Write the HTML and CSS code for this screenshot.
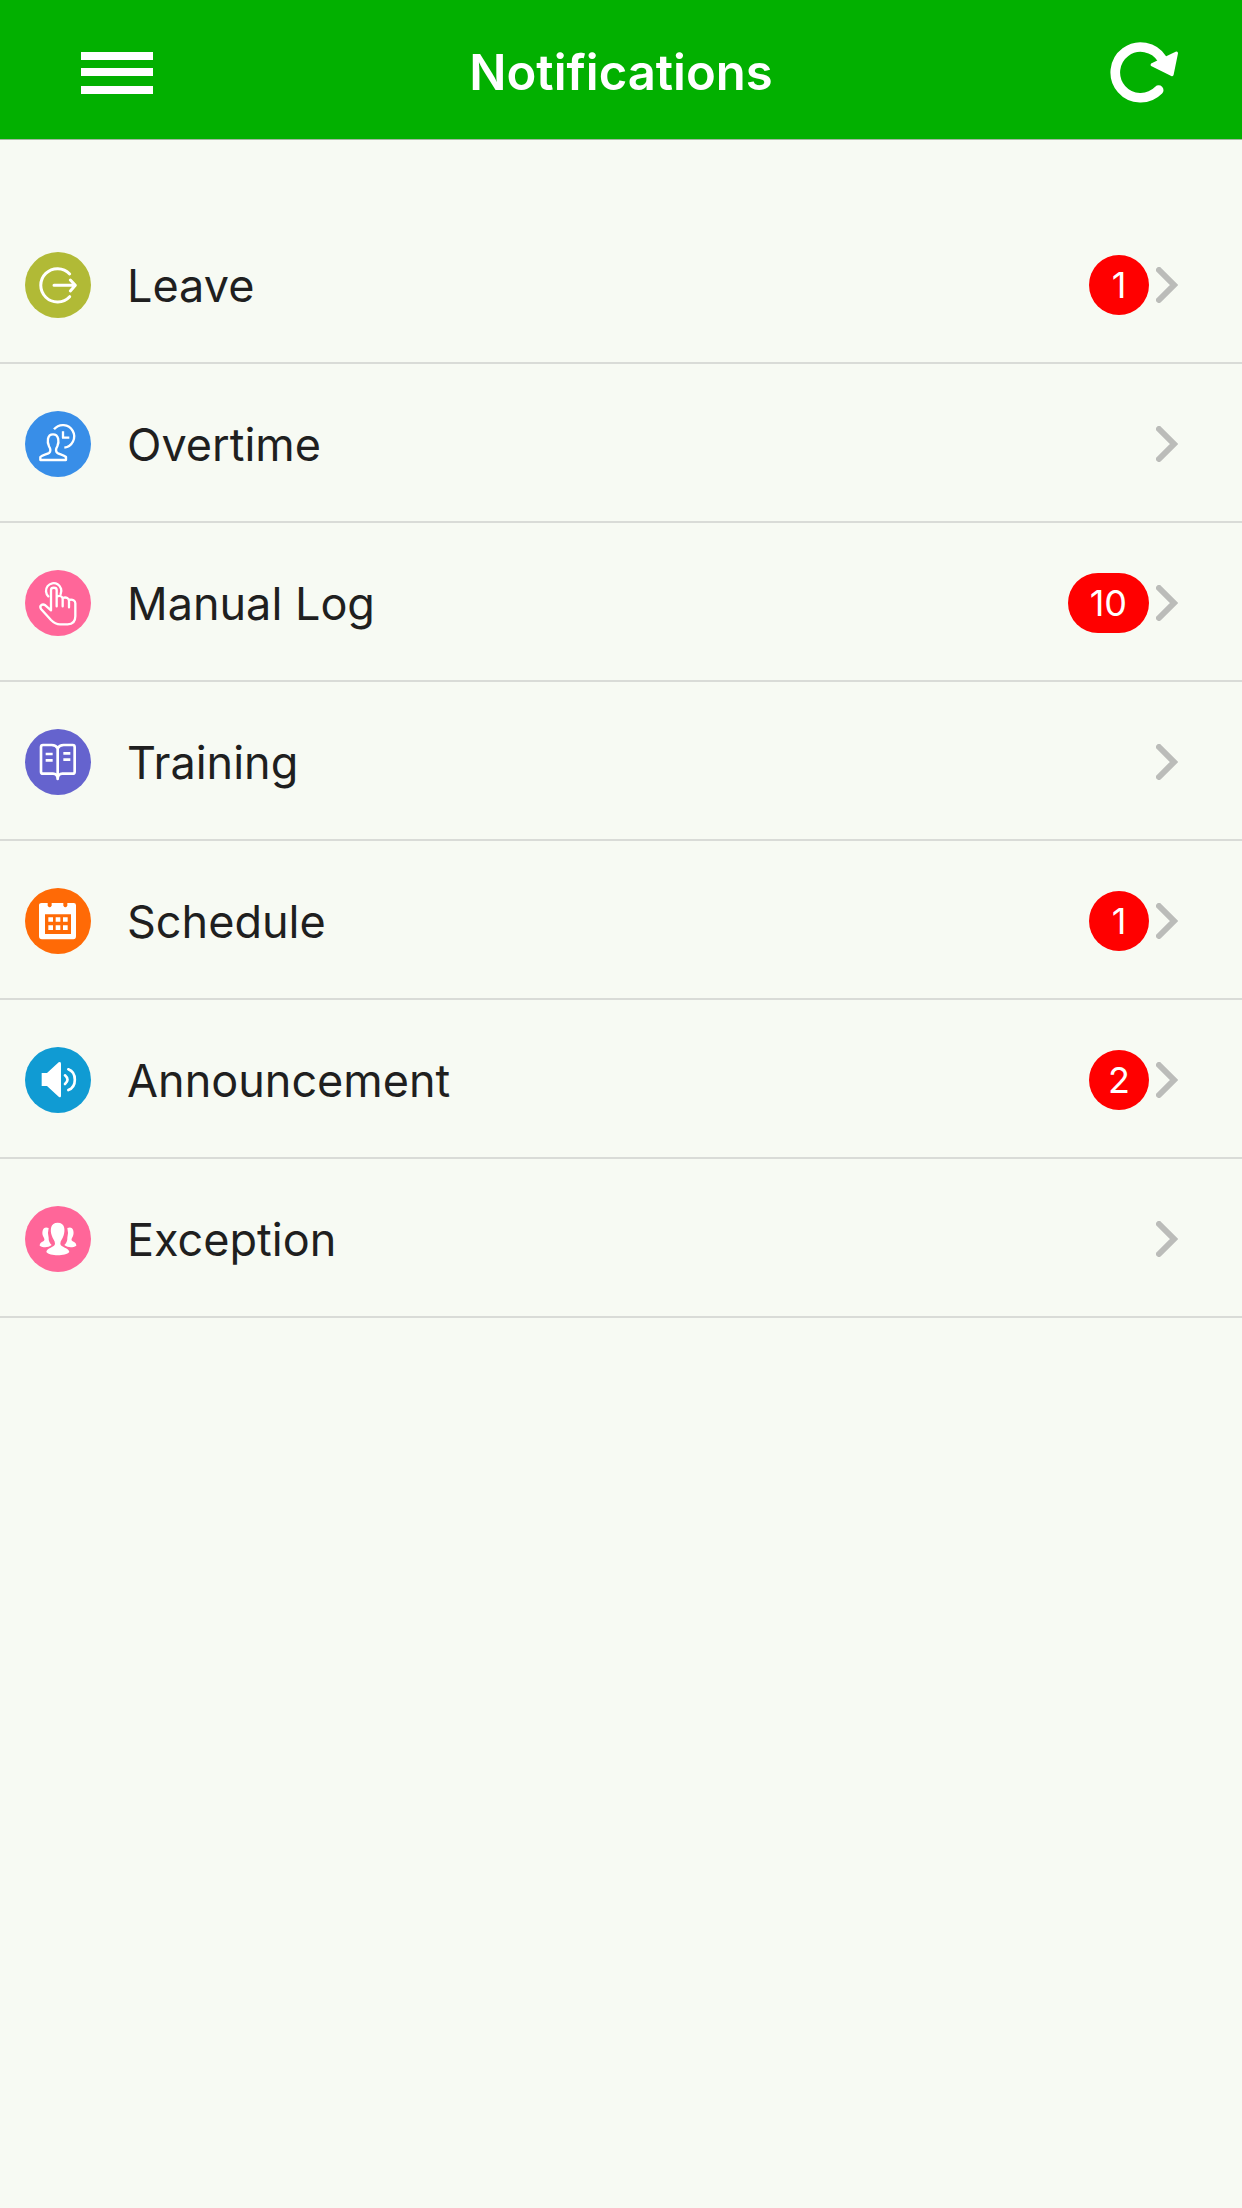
FILE: index.html
```html
<!DOCTYPE html>
<html lang="en">
<head>
<meta charset="utf-8">
<meta name="viewport" content="width=device-width, initial-scale=1">
<title>Notifications</title>
<link rel="stylesheet" href="styles.css">
</head>
<body>
<svg class="sprite" aria-hidden="true">
  <symbol id="chevron" viewBox="0 0 22 36"><path d="M3 3l15 15L3 33" fill="none" stroke="#bbbcb9" stroke-width="6" stroke-linecap="round" stroke-linejoin="miter"/></symbol>
</svg>
<header class="topbar">
  <button class="icon-button icon-button-start" type="button" aria-label="Menu">
    <svg class="menu-icon" viewBox="0 0 72 42" fill="#fff"><path d="M0 0h72v8H0zM0 16h72v8H0zM0 34h72v8H0z"/></svg>
  </button>
  <h1 class="title">Notifications</h1>
  <button class="icon-button icon-button-end" type="button" aria-label="Refresh">
    <svg class="refresh-icon" viewBox="0 0 204 182"><path d="M146 144A76 76 0 1 1 156 50" fill="none" stroke="#fff" stroke-width="29" stroke-linecap="round"/><path d="M199 33L186 97L127 68Z" fill="#fff" stroke="#fff" stroke-width="10" stroke-linejoin="round"/></svg>
  </button>
</header>
<main>
  <ul class="list">
    <li><a class="row" href="#leave">
      <svg class="category leave" viewBox="0 0 198 198" fill="none" stroke="#fff" stroke-width="9" stroke-linecap="round" stroke-linejoin="round"><path d="M134 66A50 50 0 1 0 134 134M87 100H149M136 84L151 100L136 117"/></svg>
      <span class="label">Leave</span><span class="badge">1</span>
      <svg class="chevron" aria-hidden="true"><use href="#chevron"/></svg>
    </a></li>
    <li><a class="row" href="#overtime">
      <svg class="category overtime" viewBox="0 0 198 198" fill="none" stroke="#fff" stroke-width="7" stroke-linejoin="round"><path d="M87 55A34 34 0 1 1 118 110M114 61V80H133"/><path d="M46 147V138C52 132 66 130 72 126C79 120 76 112 72 106C66 93 66 70 84 70C102 70 103 93 97 106C93 112 91 120 97 126C104 130 116 132 123 138V147Z"/></svg>
      <span class="label">Overtime</span>
      <svg class="chevron" aria-hidden="true"><use href="#chevron"/></svg>
    </a></li>
    <li><a class="row" href="#manual-log">
      <svg class="category manual" viewBox="0 0 198 198" fill="none" stroke="#fff" stroke-width="7" stroke-linecap="round" stroke-linejoin="round"><path d="M70 79A23 23 0 1 1 107 72"/><path d="M78 121V60C78 51 95 51 95 60V109M95 80C105 75 113 79 113 87V109M113 84C124 80 132 85 132 92V112M132 90C143 87 151 92 151 100V139C151 155 143 163 128 163H105C94 163 85 157 78 150L48 117C42 107 52 100 61 106L78 121"/></svg>
      <span class="label">Manual Log</span><span class="badge badge-wide">10</span>
      <svg class="chevron" aria-hidden="true"><use href="#chevron"/></svg>
    </a></li>
    <li><a class="row" href="#training">
      <svg class="category training" viewBox="0 0 198 198" fill="none" stroke="#fff" stroke-width="8" stroke-linejoin="round"><path d="M98 58C94 50 88 48 80 48H54Q48 48 48 54V128Q48 134 54 134H84C92 134 98 140 98 150C98 140 104 134 112 134H143Q149 134 149 128V54Q149 48 143 48H116C108 48 102 50 98 58V145"/><path d="M62 75H83M62 94H83M115 73H136M115 92H136"/></svg>
      <span class="label">Training</span>
      <svg class="chevron" aria-hidden="true"><use href="#chevron"/></svg>
    </a></li>
    <li><a class="row" href="#schedule">
      <svg class="category schedule" viewBox="0 0 198 198"><path fill="#fff" fill-rule="evenodd" d="M50 45H68V53Q74 63 80 53V45H115V53Q121 63 127 53V45H146Q153 45 153 52V145Q153 154 145 154H51Q42 154 42 145V52Q42 45 50 45ZM60 79V138H138V79Z"/><path fill="#fff" d="M70 88H84V101H70ZM92 88H106V101H92ZM114 88H128V101H114ZM70 112H84V126H70ZM92 112H106V126H92ZM114 112H128V126H114Z"/></svg>
      <span class="label">Schedule</span><span class="badge">1</span>
      <svg class="chevron" aria-hidden="true"><use href="#chevron"/></svg>
    </a></li>
    <li><a class="row" href="#announcement">
      <svg class="category announcement" viewBox="0 0 198 198" fill="none" stroke="#fff" stroke-width="8" stroke-linecap="round"><path fill="#fff" stroke="none" d="M50 78H66L101 46Q108 42 108 50V146Q108 154 101 149L66 117H50Z"/><path d="M120 85Q135 98 120 111M130 67C156 77 156 119 130 129"/></svg>
      <span class="label">Announcement</span><span class="badge">2</span>
      <svg class="chevron" aria-hidden="true"><use href="#chevron"/></svg>
    </a></li>
    <li><a class="row" href="#exception">
      <svg class="category exception" viewBox="0 0 198 198" fill="#fff"><path d="M71 66C54 58 49 78 54 90C58 98 61 102 55 106C46 110 44 114 44 119C56 126 69 125 80 117C75 112 70 105 71 95Q67 80 71 66ZM127 66C144 58 149 78 144 90C140 98 137 102 143 106C152 110 154 114 154 119C142 126 129 125 118 117C123 112 128 105 127 95Q131 80 127 66Z"/><path d="M98 50C76 50 75 72 80 88C83 99 90 104 90 113C90 124 64 125 64 138C74 151 122 151 133 138C133 125 106 124 106 113C106 104 113 99 116 88C121 72 120 50 98 50Z"/></svg>
      <span class="label">Exception</span>
      <svg class="chevron" aria-hidden="true"><use href="#chevron"/></svg>
    </a></li>
  </ul>
</main>
</body>
</html>
```
FILE: styles.css
```css
* { box-sizing: border-box; }

body {
  margin: 0;
  background: #f7faf3;
  color: #1f1f1f;
  font-family: Inter, "Liberation Sans", sans-serif;
}

.sprite { position: absolute; width: 0; height: 0; }

.topbar {
  display: grid;
  grid-template-columns: 1fr auto 1fr;
  align-items: center;
  height: 140px;
  padding: 6px 64px 0;
  background: #02b000;
  border-bottom: 1px solid #a3b8a0;
}

.title {
  margin: 0;
  color: #fff;
  font-size: 49px;
  font-weight: 600;
  line-height: 60px;
}

.icon-button {
  display: flex;
  padding: 0;
  border: 0;
  background: none;
  cursor: pointer;
}

.icon-button-start { justify-self: start; margin-left: 17px; }
.icon-button-end { justify-self: end; }
.menu-icon { width: 72px; height: 42px; }
.refresh-icon { width: 68px; height: 61px; }

.list {
  margin: 0;
  padding: 65px 0 0;
  list-style: none;
}

.row {
  display: flex;
  align-items: center;
  height: 159px;
  padding: 2px 64px 0 25px;
  border-bottom: 2px solid #d9dbd7;
  color: inherit;
  text-decoration: none;
}

.category {
  flex: none;
  width: 66px;
  height: 66px;
  border-radius: 50%;
}

.leave { background: #b1ba36; }
.overtime { background: #388ee8; }
.manual { background: #ff6699; }
.training { background: #6563ce; }
.schedule { background: #ff6a06; }
.announcement { background: #109bd3; }
.exception { background: #ff6699; }

.label {
  flex: 1;
  padding: 2px 0 0 36px;
  font-size: 45px;
  line-height: 56px;
}

.badge {
  min-width: 60px;
  border-radius: 30px;
  background: #ff0000;
  color: #fff;
  font-size: 36px;
  line-height: 60px;
  text-align: center;
}

.badge-wide { padding: 0 22px; }

.chevron {
  flex: none;
  width: 22px;
  height: 36px;
  margin-left: 7px;
}
```
